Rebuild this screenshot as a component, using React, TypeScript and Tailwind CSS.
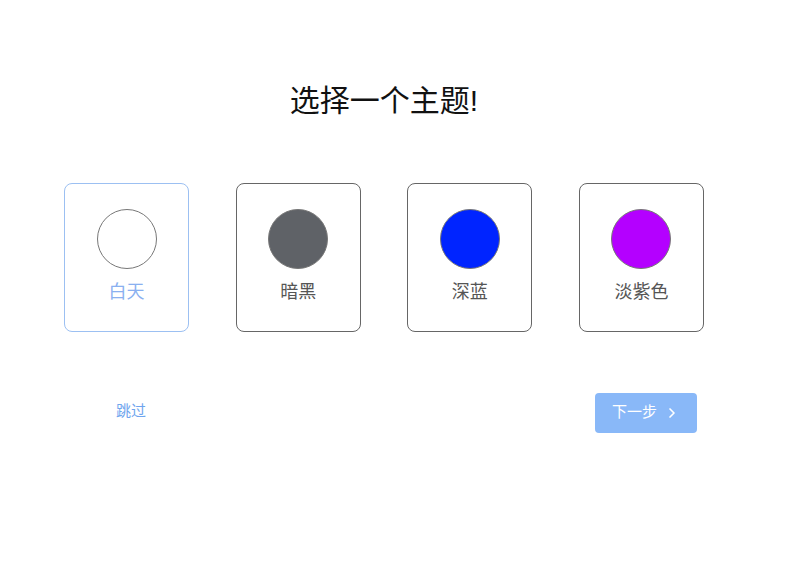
import { useState } from 'react';
import { ChevronRight } from 'lucide-react';

const themes = [
  { name: '白天', color: 'bg-white' },
  { name: '暗黑', color: 'bg-[#5f6267]' },
  { name: '深蓝', color: 'bg-[#0024ff]' },
  { name: '淡紫色', color: 'bg-[#b400ff]' },
];

export default function App() {
  const [selected, setSelected] = useState(0);

  return (
    <div
      className="min-h-screen bg-white pl-[64px]"
      style={{ fontFamily: '"Liberation Sans", "Noto Sans CJK SC", sans-serif' }}
    >
      <div className="w-[640px] pt-[81px]">
        <h1 className="text-center text-[30px] leading-[40px] text-[#111]">选择一个主题!</h1>

        <div className="mt-[62px] flex justify-between">
          {themes.map((t, i) => (
            <button
              key={t.name}
              onClick={() => setSelected(i)}
              className={`flex h-[149px] w-[125px] flex-col items-center rounded-[8px] border pt-[25px] ${
                selected === i ? 'border-[#9cc0f2]' : 'border-[#666]'
              }`}
            >
              <div className={`h-[60px] w-[60px] rounded-full border border-[#777] ${t.color}`} />
              <span
                className={`mt-[10px] text-[18px] leading-[26px] ${
                  selected === i ? 'text-[#8ab0f0]' : 'text-[#555]'
                }`}
              >
                {t.name}
              </span>
            </button>
          ))}
        </div>

        <div className="mt-[61px] flex items-center justify-between pl-[16px] pr-[7px]">
          <button className="h-[40px] w-[102px] pb-[3px] text-[15px] text-[#6fa5ee]">跳过</button>
          <button className="flex h-[40px] w-[102px] items-center justify-center gap-[7px] rounded-[4px] bg-[#89b8f8] pb-[1px] text-[15px] text-white">
            下一步
            <ChevronRight className="h-[16px] w-[16px]" strokeWidth={2.5} />
          </button>
        </div>
      </div>
    </div>
  );
}
